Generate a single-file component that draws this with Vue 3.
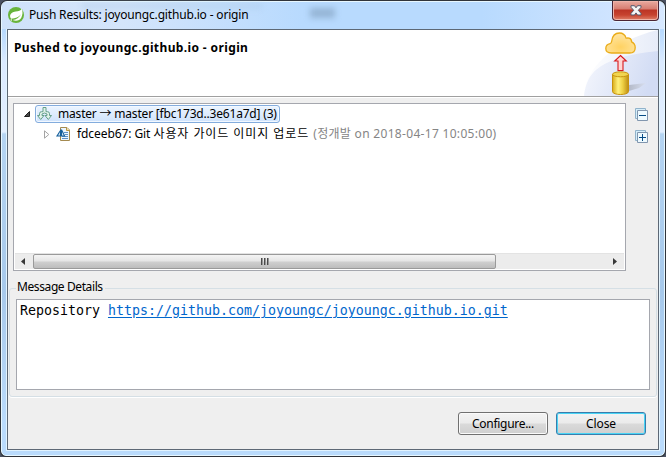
<script setup>
const title = 'Push Results: joyoungc.github.io - origin'
const heading = 'Pushed to joyoungc.github.io - origin'
const repoUrl = 'https://github.com/joyoungc/joyoungc.github.io.git'
</script>

<template>
  <div class="window">
    <div class="frame">
      <header class="titlebar">
        <svg class="app-icon" width="16" height="16" viewBox="0 0 16 16">
          <circle cx="8" cy="8" r="8" fill="#68b43b" />
          <path d="M13.7 1.8C12.8 4 10.5 4.300 7.700 4.600 4.600 4.900 2 6.600 2.100 9.500c.1 1 .5 1.700 1.100 2.200 4.400-.3 7.300-1.500 9.800-4.500-1.700 3.500-4.700 5.300-8.400 5.800 3.500 1.400 7.200.6 8.800-2.600 1.300-2.700 1.600-5.700.3-8.600z" fill="#fff" />
          <circle cx="3.300" cy="13" r=".8" fill="#fff" />
        </svg>
        <span class="title">{{ title }}</span>
        <span class="ghost ghost-a"></span>
        <span class="ghost ghost-b"></span>
        <button class="close-x" aria-label="Close window">
          <svg width="12" height="11" viewBox="0 0 12 11">
            <path d="M1 .7h3.500L6 2.800 7.500.7H11v1.600L8.300 5.300 11 8.400V10H7.500L6 7.900 4.500 10H1V8.400L3.700 5.300 1 2.300z" fill="#f5f5f5" stroke="#565b6e" stroke-width="1" />
          </svg>
        </button>
      </header>

      <main class="client">
        <section class="banner">
          <h1>{{ heading }}</h1>
          <svg class="banner-art" width="78" height="66" viewBox="0 0 78 66">
            <defs>
              <linearGradient id="arc" x1="0" y1="0" x2="1" y2=".2">
                <stop offset="0" stop-color="#f5f7fd" /><stop offset="1" stop-color="#d2dcf4" />
              </linearGradient>
              <linearGradient id="outer" x1="0" y1="0" x2="1" y2="0">
                <stop offset="0" stop-color="#fff" /><stop offset="1" stop-color="#e7ecf8" />
              </linearGradient>
              <radialGradient id="cloud" cx=".5" cy=".7" r=".6">
                <stop offset="0" stop-color="#ffd262" /><stop offset="1" stop-color="#ffe39b" />
              </radialGradient>
              <linearGradient id="drum">
                <stop offset="0" stop-color="#d8ab18" /><stop offset=".35" stop-color="#fff17c" /><stop offset=".65" stop-color="#edcf43" /><stop offset="1" stop-color="#bd8d13" />
              </linearGradient>
              <linearGradient id="shade">
                <stop offset="0" stop-color="#b4bac9" /><stop offset="1" stop-color="#d8dfef" />
              </linearGradient>
            </defs>
            <path d="M3 66C5 40 33 10 78 0V66z" fill="url(#outer)" />
            <path d="M4 66C6 49 13 39 29 32 44 25 61 23 78 21V66z" fill="url(#arc)" />
            <g transform="translate(2 -1)">
              <path d="M47 62V56l17-2-7 5z" fill="url(#shade)" />
              <path d="M29.500 24c-3.500 0-5.700-1.900-5.700-4.500 0-2.500 1.600-4.300 4.300-4.800 1-.2 1.400-1 1.600-2.500.5-4.800 3.400-8.200 7.800-8.200 3.400 0 5.600 2 6.600 5.100.6 0 1.600-.2 3 0 1.600.5 2.500 1.800 2.500 3.800 2.400 1.200 3.600 3 3.600 5.500 0 3.400-2.200 5.600-5.600 5.600z" fill="url(#cloud)" stroke="#eaac19" stroke-width="1.300" />
              <path d="M38.500 26.500l5.800 5.500h-3.300V41.500h-5V32h-3.300z" fill="#ffd6d3" stroke="#d8191c" stroke-width="1.100" />
              <path d="M30.500 45.500v17c0 4 16 4 16 0v-17z" fill="url(#drum)" stroke="#c7930e" />
              <ellipse cx="38.500" cy="45.300" rx="8" ry="2.500" fill="#f1d54f" stroke="#c7930e" />
            </g>
          </svg>
        </section>

        <section class="results">
          <div class="tree">
            <div class="row root">
              <svg class="twist" width="8" height="8" viewBox="0 0 8 8"><path d="M6.500 1.500v5H1.500z" fill="#494949" stroke="#202020" /></svg>
              <div class="selected">
                <svg width="15" height="14" viewBox="0 0 15 14">
                  <path d="M6 .5h3v4.200h1.500q2 0 2 2v1.800h2l-3.200 4-3.300-4h2V7L7.500 6 5 7v1.500h2l-3.300 4-3.200-4h2V6.700q0-2 2-2H6z" fill="#e1f3e9" stroke="#659f8a" />
                </svg>
                <span class="root-text">master → master [fbc173d..3e61a7d] (3)</span>
              </div>
            </div>
            <div class="row child">
              <svg class="twist" width="7" height="9" viewBox="0 0 7 9"><path d="M1.500.8v7.400L5.800 4.500z" fill="#fff" stroke="#a4a4a4" /></svg>
              <svg class="commit" width="15" height="14" viewBox="0 0 15 14">
                <path d="M4.500.5H11L13.500 3v10.500h-9z" fill="#edf6ff" stroke="#a48a50" />
                <path d="M10.500.5v3h3" fill="#f5dfa0" stroke="#b69546" />
                <path d="M8 5.500h4M9 7.500h3M6 9.500h6M6 11.500h6" stroke="#5e92c8" />
                <path d="M0 9.500L4.500 2.500h1.500l3.500 7z" fill="#155e9b" />
                <path d="M4 5v3.500H2zM6 5l1.800 3.500H6z" fill="#d1e5f4" />
              </svg>
              <span class="commit-text">fdceeb67: Git <span class="korean">사용자 가이드 이미지 업로드</span></span>
              <span class="meta">(정개발 on 2018-04-17 10:05:00)</span>
            </div>
            <div class="scrollbar">
              <svg width="17" height="15" viewBox="0 0 17 15"><path d="M9 4v7L5 7.500z" fill="#383838" /></svg>
              <div class="thumb"><i></i><i></i><i></i></div>
              <svg class="right-arrow" width="17" height="15" viewBox="0 0 17 15"><path d="M6 4v7l4-3.500z" fill="#383838" /></svg>
            </div>
          </div>
          <div class="tools">
            <svg v-for="kind in ['minus', 'plus']" :key="kind" width="13" height="13" viewBox="0 0 13 13">
              <path d="M.5.5h10v10H.5z" fill="#d5eefa" stroke="#91b3cb" />
              <path d="M2.500 2.500h10v10h-10z" fill="#eefaff" stroke="#8196ae" />
              <path :d="kind === 'plus' ? 'M4 7.500h7M7.500 4v7' : 'M4 7.500h7'" stroke="#064b85" />
            </svg>
          </div>
        </section>

        <fieldset class="details">
          <legend>Message Details</legend>
          <div class="message">Repository <a>{{ repoUrl }}</a></div>
        </fieldset>

        <footer class="actions">
          <button class="btn configure"><span>Configure...</span></button>
          <button class="btn primary"><span>Close</span></button>
        </footer>
      </main>
    </div>
  </div>
</template>

<style>
body { background: #4b5262; }
</style>

<style scoped>
* { box-sizing: border-box; }
.window {
  width: 666px; height: 457px; padding: 1px;
  background: #30343b; border-radius: 7px 7px 6px 6px;
  font: 12px/16px "Noto Sans", "Noto Sans CJK KR", sans-serif; color: #000;
  white-space: nowrap; overflow: hidden;
}
.frame {
  height: 455px; padding: 0 5px 5px; border: 1px solid #e7f7ff; border-radius: 6px 6px 5px 5px;
  background: linear-gradient(#b9d9fb 0, #b8dafe 29px, #dbeaff 60px, #e3efff 130px, #b5d4f2 132px, #a7c9eb 290px, #badbfc 420px);
}
.titlebar {
  position: relative; height: 27px; display: flex; align-items: flex-start; margin: 0 -5px; padding: 4px 0 0 6px;
  background: linear-gradient(90deg, #cfe2fa 0, #d4e5fb 120px, #b8dafe 300px, #b8dafe 480px, #cfe4ff 610px, #d7e8ff 100%);
  border-radius: 5px 5px 0 0;
}
.app-icon { margin-top: 1px; }
.title { position: relative; z-index: 1; margin-left: 5px; line-height: 17px; letter-spacing: -.17px; }
.ghost { position: absolute; filter: blur(3px); }
.ghost-a { left: 80px; top: 1px; width: 180px; height: 6px; background: #a9c7e66e; }
.ghost-b { left: 308px; top: 6px; width: 25px; height: 10px; background: #6785a06e; }
.close-x {
  position: absolute; right: 5px; top: -1px; width: 47px; height: 20px; padding: 1px 0 1px; border: 1px solid #4b2534; border-top: 0; border-radius: 0 0 4px 4px;
  background: linear-gradient(#e9aaa0 0, #d67d71 8px, #bb3425 9px, #c7432f 14px, #df8069 100%); box-shadow: inset 0 0 0 1px #eeb3a8, 0 1px #e7f6ff;
  display: flex; align-items: center; justify-content: center;
}
.client { height: 421px; border: 1px solid #5d6875; background: #efefef; box-shadow: 0 0 0 1px #e2f4ff; display: flex; flex-direction: column; }
.banner { height: 67px; flex: none; display: flex; justify-content: space-between; background: #fff; border-bottom: 1px solid #a0a0a0; box-shadow: 0 1px #fff; }
.banner h1 { margin: 9px 0 0 6px; font-size: 12px; line-height: 17px; font-weight: 700; letter-spacing: .38px; }
.banner-art { flex: none; }
.results { display: flex; margin: 6px 0 0 5px; height: 168px; flex: none; }
.tree { width: 613px; border: 1px solid #a5a7ae; background: #fff; display: flex; flex-direction: column; }
.row { display: flex; align-items: center; height: 20px; flex: none; }
.root { padding-left: 9px; }
.selected { display: flex; align-items: center; height: 18px; width: 245px; margin-left: 4px; padding-left: 1px; border: 1px solid #83acdd; border-radius: 3px; background: linear-gradient(#ecf5ff, #cfe3fc); box-shadow: inset 0 0 0 1px #f2f8ff; }
.selected svg, .row svg { flex: none; }
.root-text { margin-left: 6px; letter-spacing: -.19px; }
.child { padding-left: 29px; }
.commit { margin-left: 6px; }
.commit-text { margin-left: 6px; letter-spacing: -.08px; }
.korean { letter-spacing: .93px; }
.meta { margin-left: 4px; color: #858585; letter-spacing: .31px; }
.scrollbar { display: flex; margin: auto 1px 1px; height: 16px; background: #ececec; border-top: 1px solid #e3e3e3; }
.scrollbar svg { margin-left: 1px; }
.thumb { width: 463px; height: 15px; border: 1px solid #9a9a9a; border-radius: 2px; background: linear-gradient(#f4f4f4 0, #e5e5e5 6px, #cfcfcf 7px, #bdbdbd 100%); display: flex; gap: 1px; align-items: center; justify-content: center; }
.thumb i { width: 2px; height: 7px; border-left: 1px solid #4b4b4b; border-right: 1px solid #969696; }
.scrollbar .right-arrow { margin-left: auto; }
.tools { display: flex; flex-direction: column; gap: 9px; padding: 5px 0 0 9px; }
.details { margin: 10px 1px 0; padding: 0 6px 6px; height: 116px; border: 1px solid #d5dfe5; border-radius: 3px; box-shadow: 0 1px #fff, inset 0 1px transparent; min-width: 0; }
.details legend { padding: 0 2px 0 1px; height: 14px; line-height: 12px; letter-spacing: -.4px; }
.message { height: 91px; margin-top: 4px; border: 1px solid #a5a7ae; background: #fff; padding: 2px 3px; font: 13.29px/17px "DejaVu Sans Mono", monospace; }
.message a { color: #0066cc; text-decoration: underline; text-underline-offset: 2px; }
.actions { display: flex; justify-content: flex-end; gap: 8px; margin: 15px 12px 0 0; }
.btn { width: 90px; height: 23px; padding: 0; border: 1px solid #707070; border-radius: 3px; background: linear-gradient(#f3f3f3 0, #ebebeb 10px, #dadada 11px, #cfcfcf 100%); box-shadow: inset 0 0 0 1px #fafafa; font: inherit; line-height: 19px; letter-spacing: -.3px; }
.primary { border-color: #397dac; box-shadow: inset 0 0 0 1px #48d4f5; letter-spacing: -.1px; }
</style>
